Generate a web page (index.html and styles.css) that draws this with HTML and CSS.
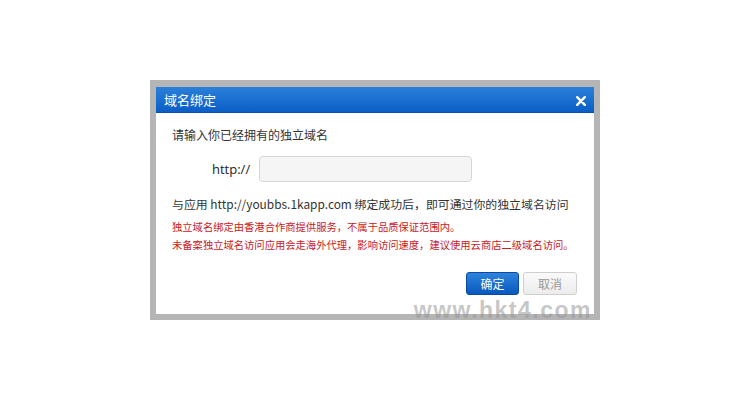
FILE: index.html
```html
<!DOCTYPE html>
<html lang="zh-CN">
<head>
  <meta charset="UTF-8">
  <title>域名绑定</title>
  <link rel="stylesheet" href="styles.css">
</head>
<body>
  <div class="page">
    <!-- Dialog frame -->
    <div class="frame">
      <div class="dialog">
        <div class="dialog-header">
          <span class="dialog-title">域名绑定</span>
          <svg class="dialog-close" width="10" height="10" viewBox="0 0 10 10">
            <path d="M1.2 1.2 L8.8 8.8 M8.8 1.2 L1.2 8.8" stroke="#ffffff" stroke-width="2.4" stroke-linecap="round"/>
          </svg>
        </div>

        <div class="dialog-body">
          <p class="intro">请输入你已经拥有的独立域名</p>

          <div class="domain-row">
            <label class="domain-label">http://</label>
            <input class="domain-input" type="text">
          </div>

          <p class="info">与应用 http://youbbs.1kapp.com 绑定成功后，即可通过你的独立域名访问</p>
          <p class="warn">独立域名绑定由香港合作商提供服务，不属于品质保证范围内。</p>
          <p class="warn">未备案独立域名访问应用会走海外代理，影响访问速度，建议使用云商店二级域名访问。</p>

          <div class="actions">
            <button class="btn btn-primary">确定</button>
            <button class="btn btn-cancel">取消</button>
          </div>
        </div>
      </div>
      <div class="watermark">www.hkt4.com</div>
    </div>
  </div>
</body>
</html>
```

FILE: styles.css
```css
/* Global */
* {
  margin: 0;
  padding: 0;
  box-sizing: border-box;
}

body {
  background: #ffffff;
  font-family: "Noto Sans CJK SC", "Liberation Sans", sans-serif;
  color: #333333;
}

.page {
  padding: 80px 0 0 150px;
}

/* Frame round the dialog */
.frame {
  position: relative;
  width: 450px;
  height: 240px;
  border: 6px solid #b5b5b5;
  border-top-width: 7px;
  background: #ffffff;
}

.dialog {
  display: flex;
  flex-direction: column;
  height: 100%;
}

/* Header */
.dialog-header {
  height: 26px;
  display: flex;
  align-items: center;
  justify-content: space-between;
  padding: 0 8px 0 8px;
  background: linear-gradient(#2b80da, #0a5ec6);
  border-bottom: 1px solid #0a4fa8;
  color: #ffffff;
}

.dialog-title {
  font-size: 13px;
  line-height: 1;
}

.dialog-close {
  display: block;
  margin-top: 2px;
}

/* Body */
.dialog-body {
  padding: 12px 17px 0 16px;
}

.intro {
  font-size: 12px;
  line-height: 20px;
}

.domain-row {
  display: flex;
  align-items: center;
  margin-top: 11px;
  padding-left: 40px;
}

.domain-label {
  font-family: "Open Sans", "Liberation Sans", sans-serif;
  font-size: 13px;
  color: #222222;
  margin-right: 9px;
}

.domain-input {
  width: 213px;
  height: 26px;
  border: 1px solid #d6d6d6;
  border-radius: 4px;
  background: #f5f5f5;
  outline: none;
}

.info {
  margin-top: 11px;
  font-size: 11.9px;
  line-height: 22px;
  color: #333333;
  white-space: nowrap;
}

.warn {
  font-size: 10.3px;
  line-height: 18px;
  color: #c8201d;
  white-space: nowrap;
}

.info + .warn {
  margin-top: 3px;
}

/* Buttons */
.actions {
  display: flex;
  justify-content: flex-end;
  gap: 4px;
  margin-top: 18px;
}

.btn {
  height: 23px;
  border-radius: 3px;
  font-family: "Noto Sans CJK SC", sans-serif;
  font-size: 12px;
  cursor: pointer;
}

.btn-primary {
  width: 53px;
  color: #ffffff;
  background: linear-gradient(#2d84dc, #0a58bd);
  border: 1px solid #0a4aa0;
}

.btn-cancel {
  width: 54px;
  color: #999999;
  background: linear-gradient(#fafafa, #ececec);
  border: 1px solid #cfcfcf;
}

/* Watermark over the lower edge */
.watermark {
  position: absolute;
  right: 2px;
  bottom: -10px;
  font-family: "Liberation Sans", sans-serif;
  font-size: 23px;
  font-weight: bold;
  letter-spacing: 1.5px;
  color: rgba(150, 150, 150, 0.55);
}
```
